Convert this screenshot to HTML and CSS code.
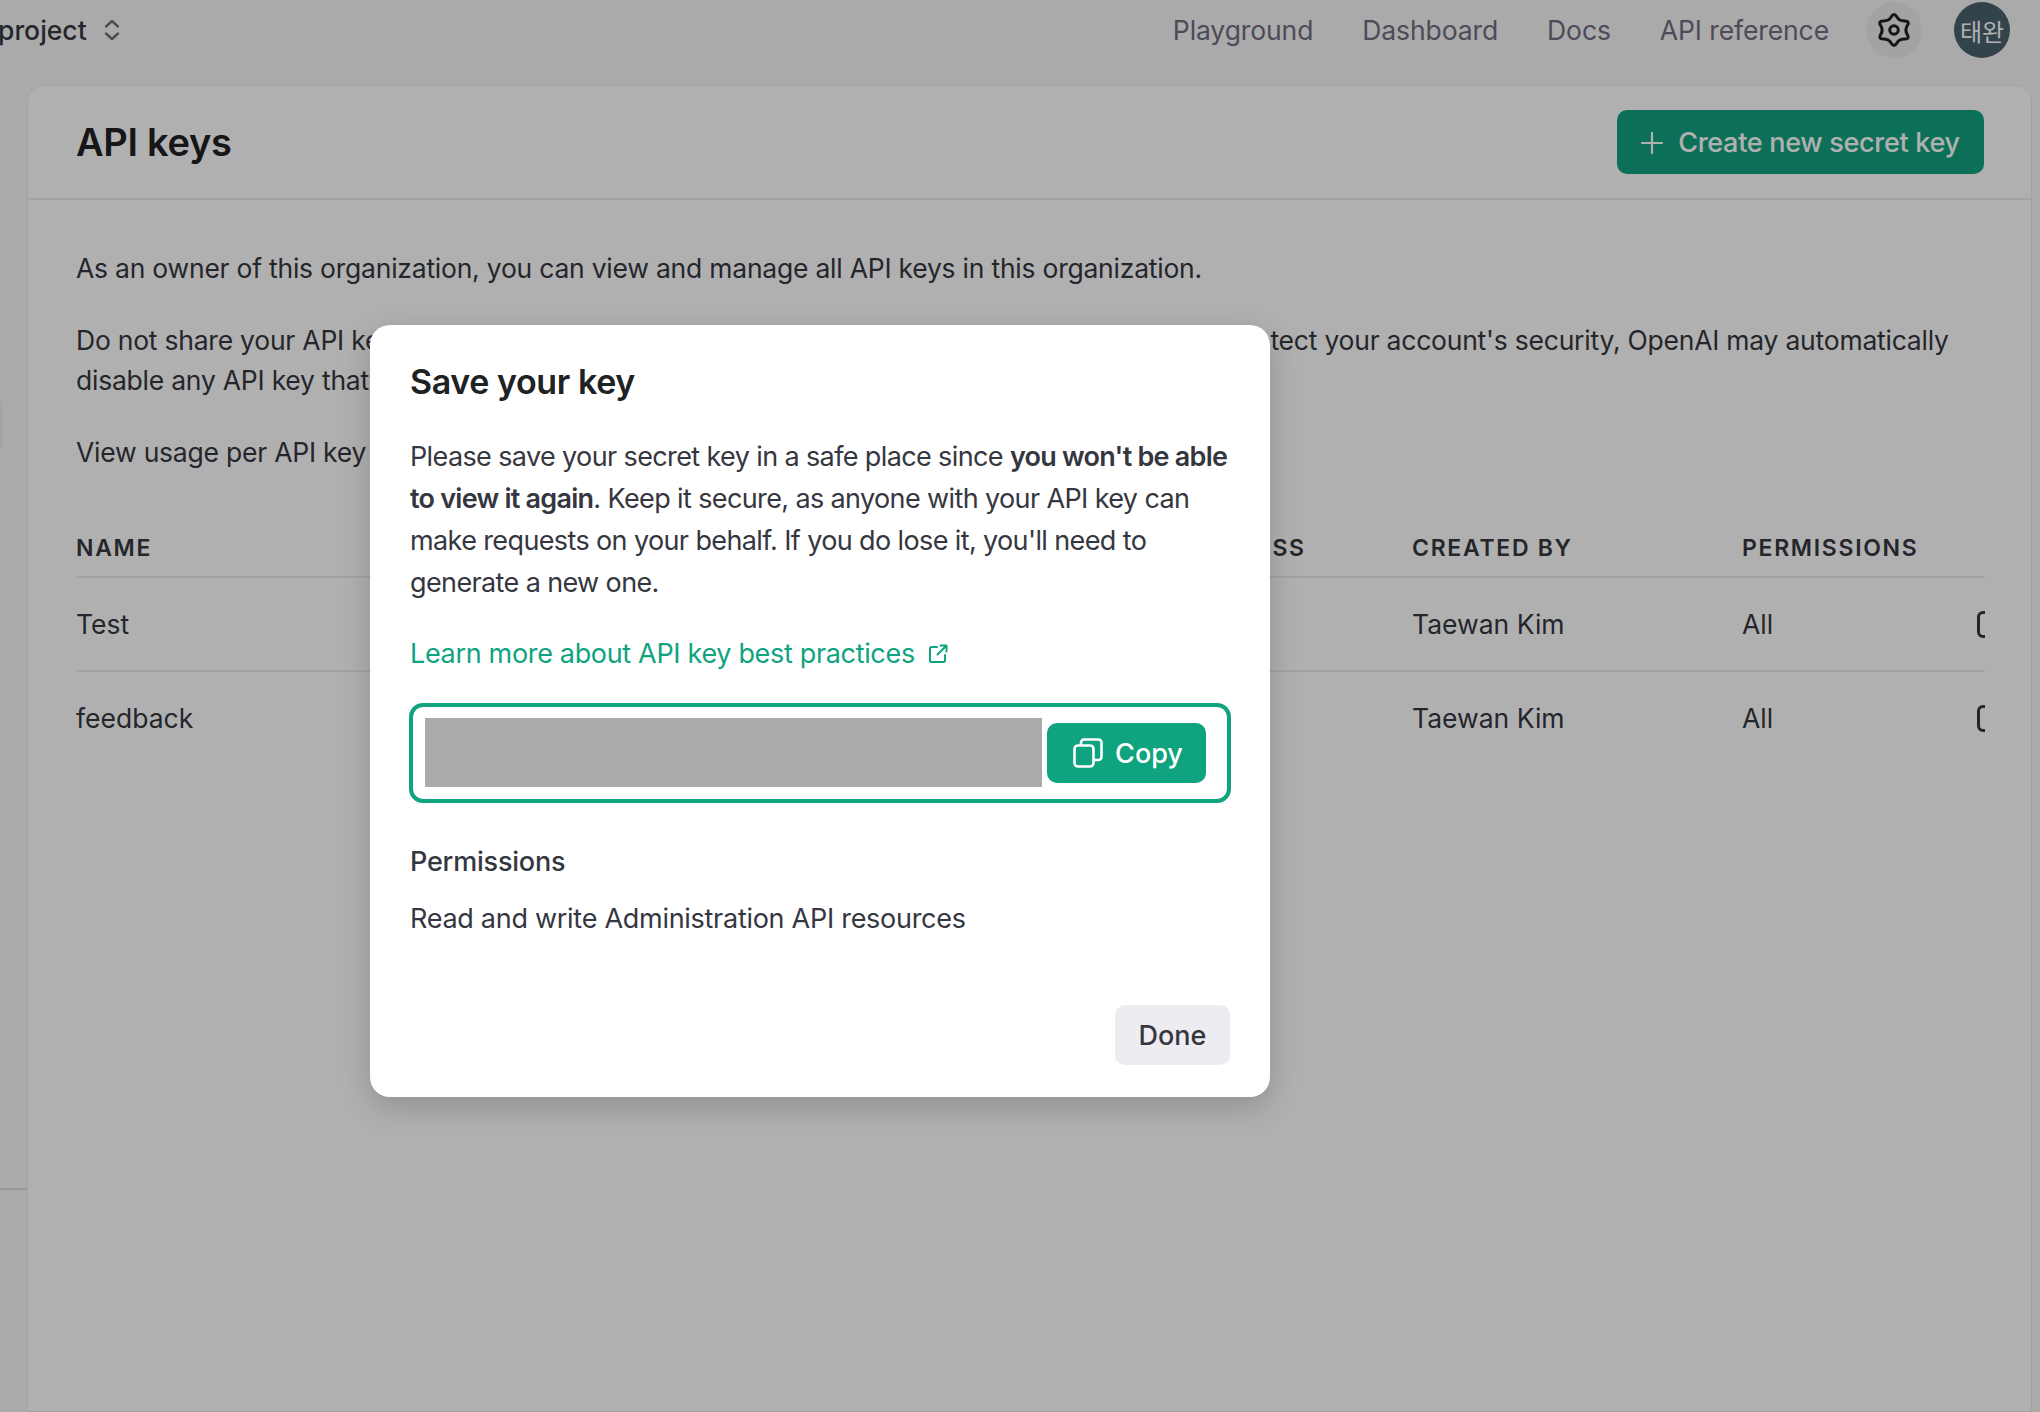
FILE: index.html
```html
<!DOCTYPE html>
<html lang="en">
<head>
	<meta charset="UTF-8">
	<title>API keys</title>
	<link rel="stylesheet" href="styles.css">
</head>
<body>

	<div class="page">
		<header class="topbar">
			<div class="project">
				<span>project</span>
				<svg class="updown" viewBox="0 0 16 22" width="16" height="22" fill="none" stroke="currentColor" stroke-width="2.4" stroke-linecap="round" stroke-linejoin="round">
					<path d="M2 7.5 8 2l6 5.5"/>
					<path d="M2 14.5 8 20l6-5.5"/>
				</svg>
			</div>
			<nav class="topnav">
				<a href="#">Playground</a>
				<a href="#">Dashboard</a>
				<a href="#">Docs</a>
				<a href="#">API reference</a>
			</nav>
			<button class="gear">
				<svg viewBox="-2 -2 40 40" width="38" height="38" fill="none" stroke="currentColor" stroke-width="3.2" stroke-linejoin="round">
					<path d="M15 4.2Q18 -1 21 4.2Q23.4 8.700 29.500 8.500Q34.900 8.500 32 13.300Q29 18 32 22.700Q34.900 27.500 29.500 27.500Q23.400 27.300 21 31.800Q18 37 15 31.800Q12.600 27.300 6.500 27.500Q1.100 27.500 4 22.700Q7 18 4 13.300Q1.100 8.500 6.500 8.500Q12.600 8.700 15 4.200Z"/>
					<circle cx="18" cy="18" r="4.5"/>
				</svg>
			</button>
			<div class="avatar">태완</div>
		</header>

		<div class="workspace">
			<aside class="sidebar">
				<div class="side-item"></div>
				<div class="side-rule"></div>
			</aside>

			<main class="panel">
				<div class="panel-head">
					<h1>API keys</h1>
					<button class="btn-create">
						<svg viewBox="0 0 22 22" width="22" height="22" fill="none" stroke="currentColor" stroke-width="2.2" stroke-linecap="round">
							<path d="M11 1v20M1 11h20"/>
						</svg>
						Create new secret key
					</button>
				</div>
				<div class="panel-body">
					<p>As an owner of this organization, you can view and manage all API keys in this organization.</p>
					<p>Do not share your API key with anyone, or expose it in a browser or other client-side code. To protect your account's security, OpenAI may automatically disable any API key that has leaked publicly.</p>
					<p>View usage per API key on the Usage page.</p>

					<div class="keys">
						<div class="row row-head">
							<div>NAME</div>
							<div>ACCESS</div>
							<div>CREATED BY</div>
							<div>PERMISSIONS</div>
							<div></div>
						</div>
						<div class="row">
							<div>Test</div>
							<div></div>
							<div>Taewan Kim</div>
							<div>All</div>
							<div class="row-tool"></div>
						</div>
						<div class="row">
							<div>feedback</div>
							<div></div>
							<div>Taewan Kim</div>
							<div>All</div>
							<div class="row-tool"></div>
						</div>
					</div>
				</div>
			</main>
		</div>
	</div>

	<div class="overlay">
		<div class="modal">
			<h2>Save your key</h2>
			<p class="modal-text">Please save your secret key in a safe place since <b>you won't be able to view it again</b>. Keep it secure, as anyone with your API key can make requests on your behalf. If you do lose it, you'll need to generate a new one.</p>
			<a class="modal-link" href="#">
				Learn more about API key best practices
				<svg viewBox="0 0 20 20" width="20" height="20" fill="none" stroke="currentColor" stroke-width="2" stroke-linecap="round" stroke-linejoin="round">
					<path d="M9 3H3.5A1.5 1.5 0 0 0 2 4.500V16.500A1.500 1.500 0 0 0 3.500 18H15.500A1.500 1.500 0 0 0 17 16.500V11"/>
					<path d="M12.500 1.500H18.500V7.500M18.500 1.500 9.500 10.500"/>
				</svg>
			</a>
			<div class="key-box">
				<div class="key-mask"></div>
				<button class="btn-copy">
					<svg viewBox="0 0 30 30" width="30" height="30" fill="none" stroke="currentColor" stroke-width="2.600" stroke-linejoin="round">
						<rect x="1.500" y="7.500" width="19" height="21" rx="3.500"/>
						<path d="M8 7.500V4.500A3 3 0 0 1 11 1.500H25.500A3 3 0 0 1 28.500 4.500V19A3 3 0 0 1 25.500 22H20.500"/>
					</svg>
					Copy
				</button>
			</div>
			<h3>Permissions</h3>
			<p class="modal-perm">Read and write Administration API resources</p>
			<div class="modal-foot">
				<button class="btn-done">Done</button>
			</div>
		</div>
	</div>

</body>
</html>
```

FILE: styles.css
```css
*{
	box-sizing:border-box;
}
html,body{
	margin:0;
	height:100%;
}
body{
	position:relative;
	width:2040px;
	height:1412px;
	overflow:hidden;
	background:#f7f7f8;
	color:#353740;
	font-family:"Inter","Liberation Sans",sans-serif;
	font-size:26.500px;
}
button{
	font:inherit;
	border:none;
	cursor:pointer;
}
a{
	text-decoration:none;
}

/* top bar */
.topbar{
	height:85px;
	padding:0 30px 25px 0;
	display:flex;
	align-items:center;
}
.project{
	display:flex;
	align-items:center;
	gap:17px;
	margin-left:-2px;
	font-weight:500;
}
.updown{
	color:#6e6e80;
}
.topnav{
	margin-left:auto;
	display:flex;
	gap:49px;
	color:#6e6e80;
	letter-spacing:-.1px;
}
.topnav a{
	color:inherit;
}
.gear{
	width:56px;
	height:56px;
	margin-left:37px;
	border-radius:50%;
	background:#ececf1;
	color:#202123;
	padding:0;
	display:flex;
	align-items:center;
	justify-content:center;
}
.avatar{
	width:56px;
	height:56px;
	margin-left:32px;
	border-radius:50%;
	background:#4a616e;
	color:#fff;
	font-size:24px;
	display:flex;
	align-items:center;
	justify-content:center;
	font-family:"Noto Sans CJK KR",sans-serif;
}

/* sidebar sliver + main panel */
.workspace{
	display:flex;
	height:1327px;
	padding-right:8px;
}
.sidebar{
	width:27px;
	flex:none;
	padding-top:315px;
}
.side-item{
	width:2px;
	height:50px;
	background:#ececf1;
	border-radius:0 4px 4px 0;
}
.side-rule{
	height:2px;
	width:26px;
	margin-top:738px;
	background:#d9d9e3;
}
.panel{
	flex:1;
	min-width:0;
	background:#fff;
	border:1px solid #ececf1;
	border-radius:16px 16px 0 0;
}
.panel-head{
	height:114px;
	padding:0 47px 0 48px;
	border-bottom:2px solid #ececf1;
	display:flex;
	align-items:center;
	justify-content:space-between;
}
.panel-head h1{
	margin:0;
	font-size:38px;
	font-weight:600;
	letter-spacing:-.3px;
	color:#202123;
}
.btn-create{
	width:367px;
	height:64px;
	padding-top:2px;
	border-radius:10px;
	background:#10a37f;
	color:#fff;
	font-weight:500;
	font-size:27px;
	letter-spacing:-.3px;
	display:flex;
	align-items:center;
	justify-content:center;
	gap:15px;
}
.panel-body{
	padding:48px 46px 0 48px;
}
.panel-body p{
	margin:0 0 32px;
	line-height:40px;
	letter-spacing:-.23px;
}

/* keys table */
.keys{
	margin-top:46px;
	overflow:hidden;
}
.row{
	display:grid;
	grid-template-columns:1126px 210px 330px 235px 20px;
	align-items:center;
	height:94px;
	border-bottom:2px solid #ececf1;
}
.row:last-child{
	border-bottom-color:transparent;
}
.row-head{
	height:60px;
	padding-top:2px;
	font-size:23px;
	font-weight:600;
	letter-spacing:1.7px;
}
.row-tool{
	width:16px;
	height:27px;
	border:3px solid #353740;
	border-radius:6px;
}

/* dialog */
.overlay{
	position:absolute;
	inset:0;
	background:rgba(0,0,0,.31);
	padding:325px 0 0 370px;
}
.modal{
	width:900px;
	height:772px;
	padding:36px 40px 32px;
	background:#fff;
	border-radius:20px;
	box-shadow:0 10px 30px rgba(0,0,0,.18);
	display:flex;
	flex-direction:column;
}
.modal h2{
	margin:0;
	font-size:34px;
	line-height:42px;
	font-weight:600;
	letter-spacing:-.4px;
	color:#202123;
}
.modal-text{
	margin:33px -4px 0 0;
	font-size:27px;
	line-height:42px;
	letter-spacing:-.62px;
}
.modal-text b{
	font-weight:600;
	letter-spacing:-.75px;
}
.modal-link{
	margin-top:29px;
	color:#10a37f;
	font-size:27px;
	line-height:42px;
	letter-spacing:-.33px;
	display:flex;
	align-items:center;
	gap:13px;
}
.key-box{
	margin-top:28px;
	width:822px;
	height:100px;
	margin-left:-1px;
	border:4px solid #10a37f;
	border-radius:14px;
	display:flex;
	align-items:center;
	padding-left:12px;
	gap:5px;
}
.key-mask{
	width:617px;
	height:69px;
	margin-bottom:1px;
	background:#aaa;
}
.btn-copy{
	width:159px;
	height:60px;
	padding:0 0 0 3px;
	border-radius:10px;
	background:#10a37f;
	color:#fff;
	font-size:27px;
	font-weight:500;
	display:flex;
	align-items:center;
	justify-content:center;
	gap:12px;
}
.modal h3{
	margin:39px 0 0;
	font-size:27px;
	line-height:40px;
	font-weight:500;
	letter-spacing:-.2px;
}
.modal-perm{
	margin:17px 0 0;
	font-size:27px;
	line-height:40px;
	letter-spacing:-.28px;
}
.modal-foot{
	margin-top:auto;
	display:flex;
	justify-content:flex-end;
}
.btn-done{
	width:115px;
	height:60px;
	padding-top:2px;
	border-radius:10px;
	background:#ececf1;
	color:#353740;
	font-size:27px;
	font-weight:500;
}
```
